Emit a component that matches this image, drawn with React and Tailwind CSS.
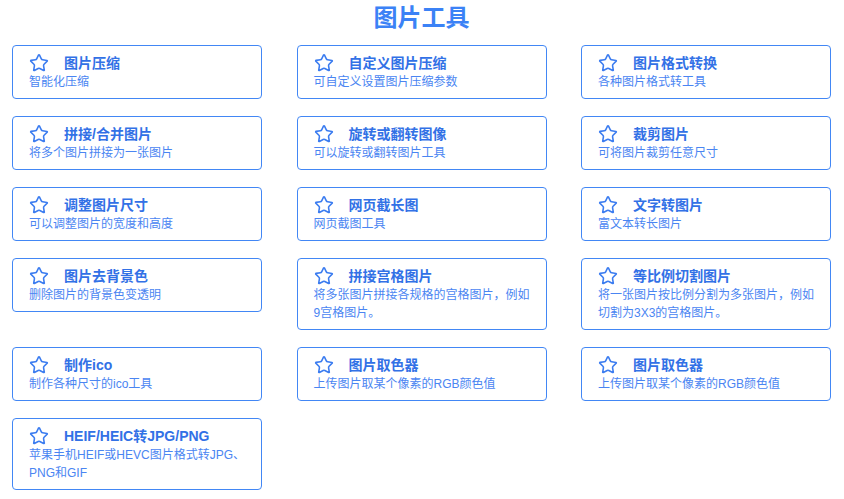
import { Star } from "lucide-react";

const tools = [
  { title: "图片压缩", desc: "智能化压缩" },
  { title: "自定义图片压缩", desc: "可自定义设置图片压缩参数" },
  { title: "图片格式转换", desc: "各种图片格式转工具" },
  { title: "拼接/合并图片", desc: "将多个图片拼接为一张图片" },
  { title: "旋转或翻转图像", desc: "可以旋转或翻转图片工具" },
  { title: "裁剪图片", desc: "可将图片裁剪任意尺寸" },
  { title: "调整图片尺寸", desc: "可以调整图片的宽度和高度" },
  { title: "网页截长图", desc: "网页截图工具" },
  { title: "文字转图片", desc: "富文本转长图片" },
  { title: "图片去背景色", desc: "删除图片的背景色变透明" },
  { title: "拼接宫格图片", desc: "将多张图片拼接各规格的宫格图片，例如9宫格图片。" },
  { title: "等比例切割图片", desc: "将一张图片按比例分割为多张图片，例如切割为3X3的宫格图片。" },
  { title: "制作ico", desc: "制作各种尺寸的ico工具" },
  { title: "图片取色器", desc: "上传图片取某个像素的RGB颜色值" },
  { title: "图片取色器", desc: "上传图片取某个像素的RGB颜色值" },
  { title: "HEIF/HEIC转JPG/PNG", desc: "苹果手机HEIF或HEVC图片格式转JPG、PNG和GIF" },
];

const ToolCard = ({ title, desc }) => (
  <div className="border border-[#4287f5] rounded-[4px] bg-white px-4 py-[7px] cursor-pointer">
    <div className="flex items-center h-5 gap-[15px]">
      <Star size={20} strokeWidth={1.9} className="text-[#3b7cf0] shrink-0" />
      <span className="text-[14px] font-bold text-[#3271e6] leading-5">{title}</span>
    </div>
    <p className="text-[12px] leading-[18px] text-[#4a85f2]">{desc}</p>
  </div>
);

export default function App() {
  return (
    <div
      className="w-[844px] min-h-[499px] bg-white pl-3 pr-[13px]"
      style={{ fontFamily: '"Liberation Sans", "Noto Sans CJK SC", sans-serif' }}
    >
      <h1 className="text-center text-[24px] font-bold leading-9 text-[#3b82f6] mb-[9px]">图片工具</h1>
      <div className="grid grid-cols-[250px_250px_250px] justify-between gap-y-[17px] items-start">
        {tools.map((t, i) => (
          <ToolCard key={i} title={t.title} desc={t.desc} />
        ))}
      </div>
    </div>
  );
}
